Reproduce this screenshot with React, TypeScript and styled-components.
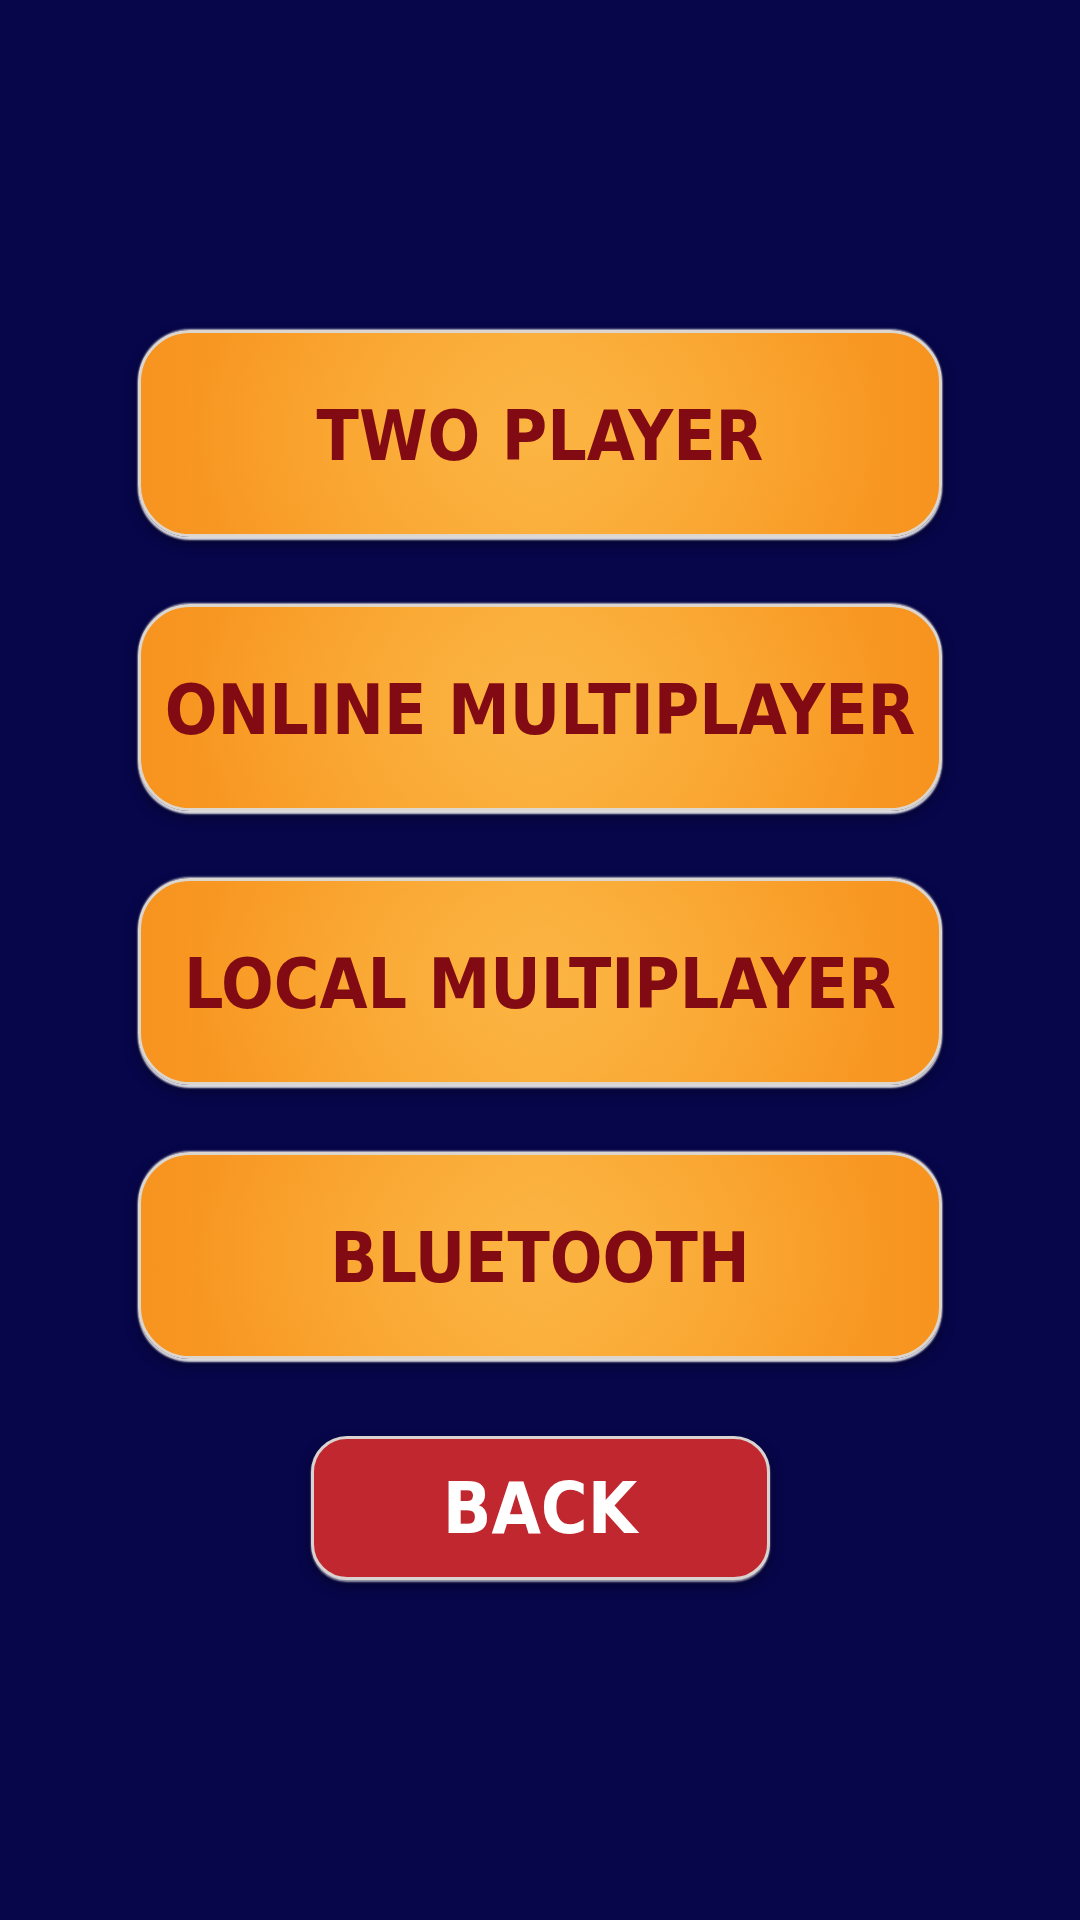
import styled, { createGlobalStyle } from "styled-components";

const GlobalStyle = createGlobalStyle`
  html, body {
    margin: 0;
    padding: 0;
    background: #07064a;
  }
`;

const modes = ["TWO PLAYER", "ONLINE MULTIPLAYER", "LOCAL MULTIPLAYER", "BLUETOOTH"];

const App = () => {
  return (
    <>
      <GlobalStyle />
      <Screen>
        <Menu>
          {modes.map((label) => (
            <ModeButton key={label}>
              <Label>{label}</Label>
            </ModeButton>
          ))}
          <BackButton>BACK</BackButton>
        </Menu>
      </Screen>
    </>
  );
};

const Screen = styled.div`
  width: 1080px;
  height: 1920px;
  background: #07064a;
  display: flex;
  justify-content: center;
  overflow: hidden;
`;

const Menu = styled.div`
  display: flex;
  flex-direction: column;
  align-items: center;
  gap: 67px;
  padding-top: 330px;
`;

const ModeButton = styled.button`
  width: 804px;
  height: 207px;
  border-radius: 52px;
  border: 3px solid #dcd6cf;
  background:
    radial-gradient(ellipse 45% 120% at 50% 50%, rgba(252, 182, 68, 0.9) 0%, rgba(252, 182, 68, 0) 100%),
    linear-gradient(90deg, #f7941f 0%, #f89a24 20%, #f9a733 50%, #f89a24 80%, #f7941f 100%);
  box-shadow:
    0 -1px 2px rgba(255, 255, 255, 0.7),
    0 3px 2px rgba(255, 255, 255, 0.85),
    0 6px 14px rgba(0, 0, 0, 0.4);
  display: flex;
  align-items: center;
  justify-content: center;
  padding: 0;
  cursor: pointer;
`;

const Label = styled.span`
  font-family: "DejaVu Sans Condensed", "DejaVu Sans", sans-serif;
  font-weight: 700;
  font-size: 69px;
  color: #820b13;
  white-space: nowrap;
  margin-top: 4px;
`;

const BackButton = styled.button`
  margin-top: 10px;
  width: 459px;
  height: 144px;
  border-radius: 36px;
  border: 3px solid #d8d2d0;
  background: #c1272e;
  box-shadow:
    0 2px 2px rgba(255, 255, 255, 0.6),
    0 6px 14px rgba(0, 0, 0, 0.4);
  color: #ffffff;
  font-family: "DejaVu Sans Condensed", "DejaVu Sans", sans-serif;
  font-weight: 700;
  font-size: 71px;
  display: flex;
  align-items: center;
  justify-content: center;
  padding: 0;
  cursor: pointer;
`;

export default App;
